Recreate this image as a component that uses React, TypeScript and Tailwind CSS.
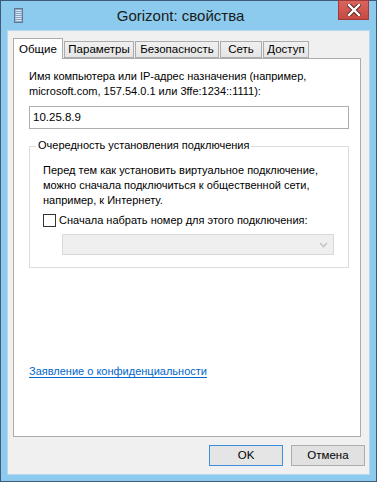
import React from "react";

const tabs = [
  { label: "Общие", w: "w-[50px]" },
  { label: "Параметры", w: "w-[70px]" },
  { label: "Безопасность", w: "w-[84px]" },
  { label: "Сеть", w: "w-[42px]" },
  { label: "Доступ", w: "w-[46px]" },
];

function TitleIcon() {
  return (
    <svg width="9" height="15" viewBox="0 0 9 15" aria-hidden>
      <rect x="0.5" y="0.5" width="8" height="14" fill="#8aa4c0" stroke="#5f7a98" />
      {[2, 4, 6, 8, 10, 12].map((y) => (
        <rect key={y} x="1.5" y={y} width="6" height="1" fill="#dbe6f2" />
      ))}
    </svg>
  );
}

function CloseButton() {
  return (
    <div className="flex h-[20px] w-[31px] items-center justify-center border border-[#a33a3a] bg-gradient-to-b from-[#d9655d] to-[#c64a42]">
      <svg width="14" height="12" viewBox="0 0 14 12" aria-hidden>
        <path d="M2 1 L12 11 M12 1 L2 11" stroke="#5a2222" strokeWidth="4.2" strokeLinecap="square" />
        <path d="M2 1 L12 11 M12 1 L2 11" stroke="#ffffff" strokeWidth="2.4" strokeLinecap="square" />
      </svg>
    </div>
  );
}

export default function App() {
  return (
    <div
      className="flex h-[482px] w-[377px] flex-col border border-[#3e5c7a] bg-[#8ccbee] text-[11px] leading-[15px] text-black"
      style={{ fontFamily: '"Liberation Sans", Arial, sans-serif' }}
    >
      {/* title bar */}
      <div className="relative flex h-[29px] shrink-0 items-start">
        <div className="ml-[13px] mt-[7px]">
          <TitleIcon />
        </div>
        <div className="flex-1 pt-[5px] text-center text-[15px] leading-[20px] text-[#1a1a1a]">Gorizont: свойства</div>
        <div className="mr-[7px] -mt-px">
          <CloseButton />
        </div>
      </div>

      {/* client */}
      <div className="mx-[6px] mb-[6px] flex flex-1 flex-col border border-[#b4d9f0] bg-[#f0f0f0] px-[5px] pt-[7px]">
        {/* tab strip */}
        <div className="relative z-10 flex h-[20px] items-end">
          {tabs.map((t, i) =>
            i === 0 ? (
              <div
                key={t.label}
                className={`-mb-px flex h-[21px] ${t.w} items-start justify-center border border-b-0 border-[#acacac] bg-white pt-[3px] text-[11.5px]`}
              >
                {t.label}
              </div>
            ) : (
              <div
                key={t.label}
                className={`ml-px flex h-[17px] ${t.w} items-center justify-center border border-[#acacac] bg-gradient-to-b from-[#f0f0f0] to-[#e5e5e5] text-[11.5px]`}
              >
                {t.label}
              </div>
            )
          )}
        </div>

        {/* panel */}
        <div className="flex h-[379px] w-[348px] flex-col border border-[#acacac] bg-white pl-[15px] pr-[12px] pt-[10px]">
          <p>
            Имя компьютера или IP-адрес назначения (например,
            <br />
            microsoft.com, 157.54.0.1 или 3ffe:1234::1111):
          </p>
          <div className="mt-[7px] flex h-[23px] w-[320px] items-center border border-[#abadb3] bg-white pl-[3px] text-[11.5px]">
            10.25.8.9
          </div>

          {/* group box */}
          <div className="relative mt-[17px] h-[122px] w-[320px] border border-[#dcdcdc] pl-[13px] pt-[16px]">
            <span className="absolute -top-[9px] left-[6px] bg-white px-[2px]">
              Очередность установления подключения
            </span>
            <p>
              Перед тем как установить виртуальное подключение,
              <br />
              можно сначала подключиться к общественной сети,
              <br />
              например, к Интернету.
            </p>
            <label className="mt-[5px] flex items-center gap-[3px]">
              <span className="h-[13px] w-[13px] border border-[#333333] bg-white" />
              <span>Сначала набрать номер для этого подключения:</span>
            </label>
            <div className="ml-[19px] mt-[6px] flex h-[21px] w-[272px] items-center justify-end border border-[#d9d9d9] bg-[#efefef] pr-[5px]">
              <svg width="9" height="6" viewBox="0 0 9 6" aria-hidden>
                <path d="M1 1 L4.5 4.5 L8 1" fill="none" stroke="#c4c4c4" strokeWidth="1.6" />
              </svg>
            </div>
          </div>

          <div className="mt-[96px]">
            <span className="text-[#0066cc] underline underline-offset-2">Заявление о конфиденциальности</span>
          </div>
        </div>

        {/* buttons */}
        <div className="mt-[8px] flex justify-end gap-[8px] text-[11.5px]">
          <button className="h-[21px] w-[74px] border border-[#3c8ee0] bg-[#e5e5e5]">OK</button>
          <button className="-mr-px h-[21px] w-[74px] border border-[#adadad] bg-[#e1e1e1]">Отмена</button>
        </div>
      </div>
    </div>
  );
}
